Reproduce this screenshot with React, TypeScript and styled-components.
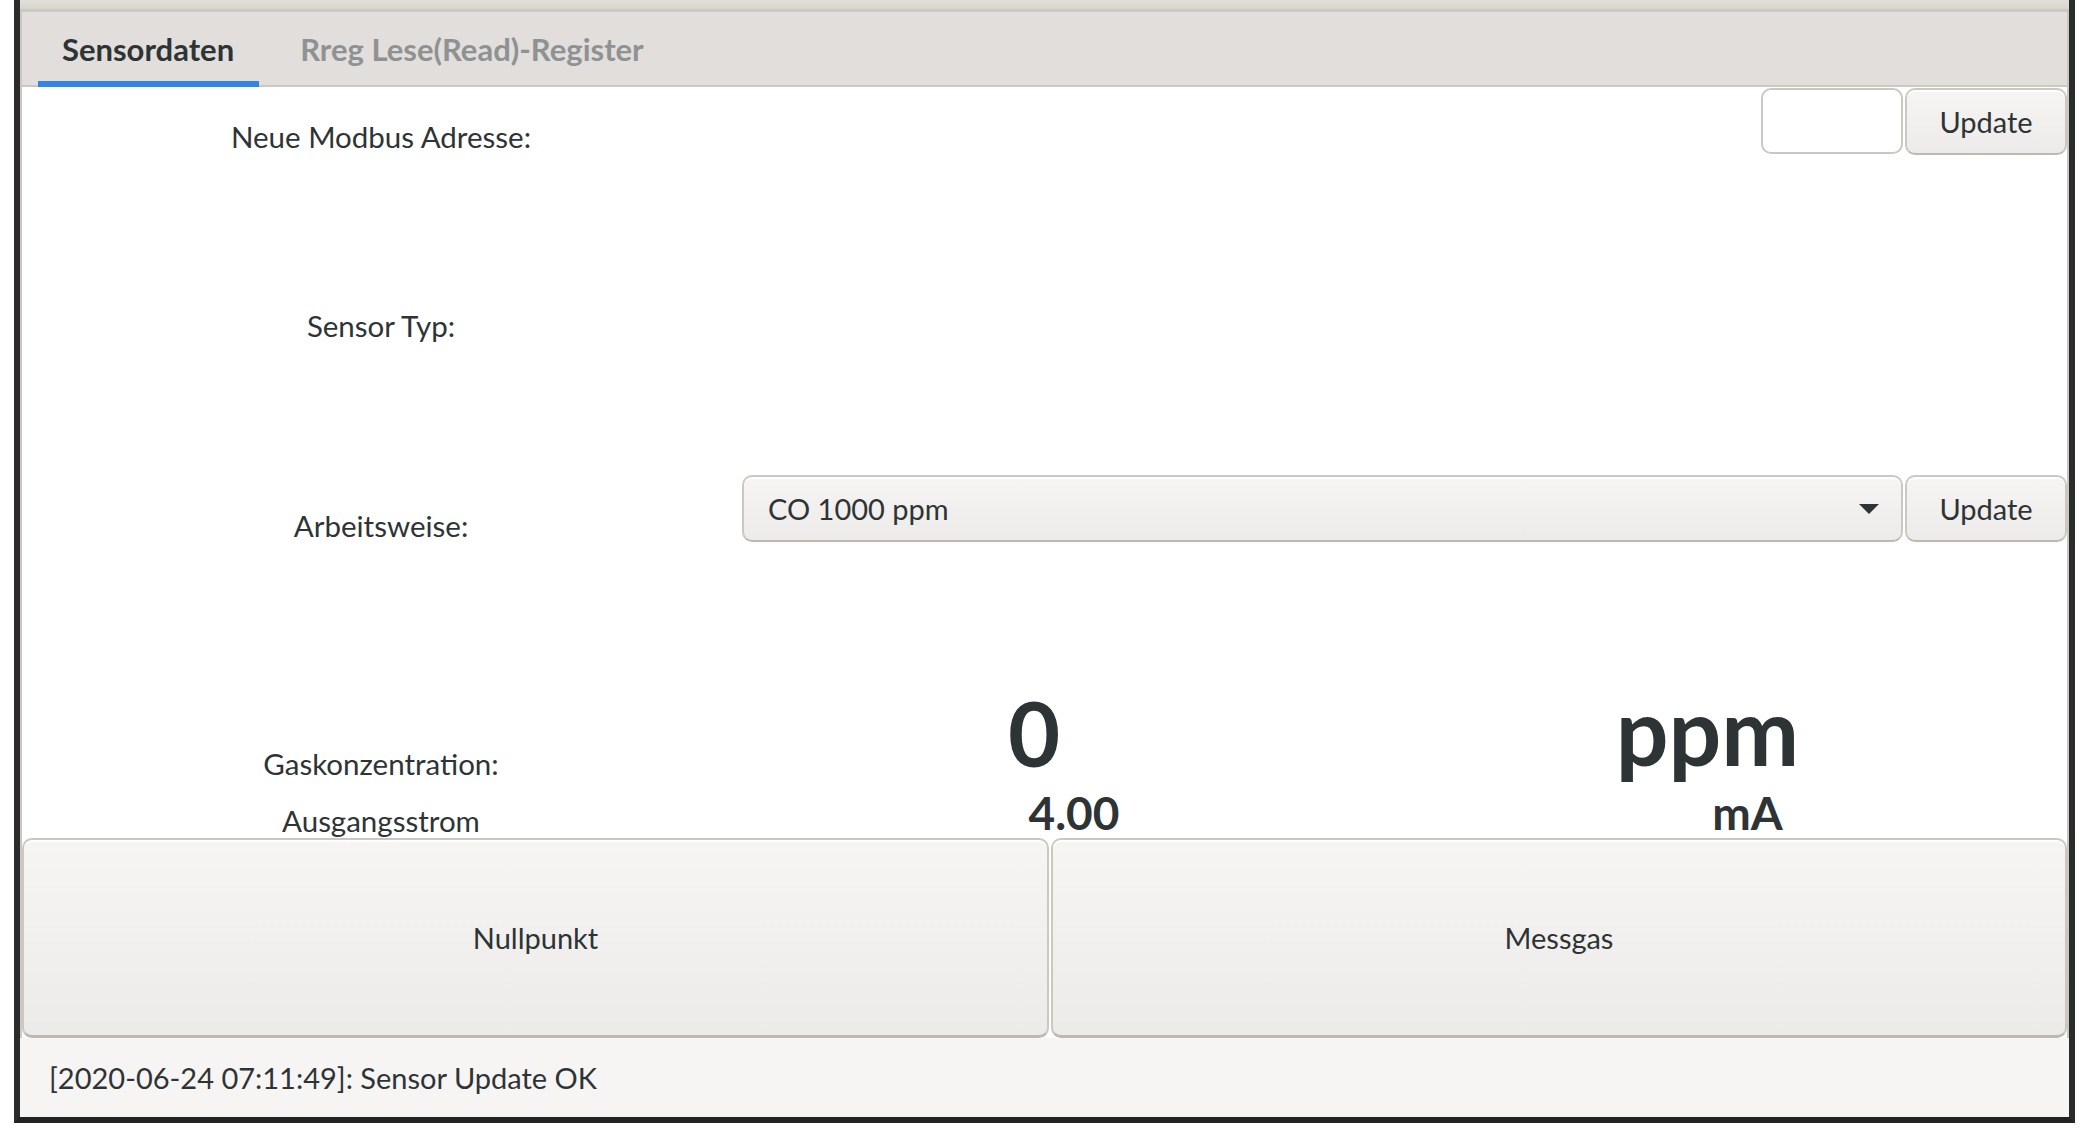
import React from "react";
import styled, { createGlobalStyle } from "styled-components";

const GlobalStyle = createGlobalStyle`
  html, body {
    margin: 0;
    padding: 0;
    background: #ffffff;
  }
  body {
    font-family: Lato, "Open Sans", "Noto Sans", sans-serif;
    color: #2e3436;
  }
`;

const Frame = styled.div`
  margin-left: 14px;
  width: 2061px;
  height: 1123px;
  box-sizing: border-box;
  border: 6px solid #2b2b2b;
  border-top: none;
  border-bottom-color: #222222;
  background: #f6f5f4;
  display: flex;
  flex-direction: column;
`;

const TopStrip = styled.div`
  height: 9px;
  background: linear-gradient(#e2dfdb, #d8d4d0);
`;

const Notebook = styled.div`
  height: 1029px;
  box-sizing: border-box;
  border: 2px solid #cdc7c2;
  border-top-width: 3px;
  border-bottom: none;
  display: flex;
  flex-direction: column;
`;

const TabBar = styled.div`
  height: 75px;
  box-sizing: border-box;
  background: #e1dedb;
  border-bottom: 2px solid #cdc7c2;
  display: flex;
  gap: 17px;
  padding-left: 16px;
`;

const Tab = styled.div<{ active?: boolean }>`
  position: relative;
  display: flex;
  align-items: center;
  padding: 0 25px 0 24px;
  font-size: 31px;
  font-weight: 700;
  color: ${(p) => (p.active ? "#2e3436" : "#8f9292")};

  &::after {
    content: "";
    display: ${(p) => (p.active ? "block" : "none")};
    position: absolute;
    left: 0;
    right: 0;
    bottom: -2px;
    height: 6px;
    background: #3584e4;
  }
`;

const Page = styled.div`
  flex: 1;
  background: #ffffff;
  display: flex;
  flex-direction: column;
`;

const FormRow = styled.div<{ h: number; pad?: number }>`
  height: ${(p) => p.h}px;
  display: grid;
  grid-template-columns: 718px 1fr auto auto;
  column-gap: 2px;
  align-items: start;
  padding-top: ${(p) => p.pad ?? 0}px;
  box-sizing: border-box;
`;

const Label = styled.div<{ shift?: number }>`
  font-size: 29.5px;
  text-align: center;
  align-self: center;
  transform: translateY(${(p) => p.shift ?? 0}px);
`;

const Entry = styled.div`
  grid-column: 3;
  width: 142px;
  height: 66px;
  box-sizing: border-box;
  background: #ffffff;
  border: 2px solid #cdc7c2;
  border-radius: 10px;
`;

const Button = styled.button`
  width: 162px;
  height: 67px;
  box-sizing: border-box;
  border: 2px solid #cdc7c2;
  border-bottom-color: #bfb8b1;
  border-radius: 10px;
  background: linear-gradient(#f6f5f4, #edebe9);
  box-shadow: inset 0 2px #ffffff;
  font-family: inherit;
  font-size: 29px;
  color: #2e3436;
  padding: 0;
`;

const Combo = styled.button`
  grid-column: 2 / span 2;
  height: 67px;
  box-sizing: border-box;
  border: 2px solid #cdc7c2;
  border-bottom-color: #bfb8b1;
  border-radius: 10px;
  background: linear-gradient(#f6f5f4, #edebe9);
  box-shadow: inset 0 2px #ffffff;
  font-family: inherit;
  font-size: 29px;
  color: #2e3436;
  display: flex;
  align-items: center;
  justify-content: space-between;
  padding: 0 22px 0 24px;
`;

const Arrow = styled.span`
  width: 0;
  height: 0;
  border-left: 10px solid transparent;
  border-right: 10px solid transparent;
  border-top: 10px solid #2e3436;
`;

const Readout = styled.div<{ h: number }>`
  height: ${(p) => p.h}px;
  display: grid;
  grid-template-columns: 718px 588px 1fr;
  align-items: end;
`;

const ReadLabel = styled.div<{ drop: number }>`
  font-size: 29.5px;
  line-height: 1;
  text-align: center;
  padding-bottom: ${(p) => p.drop}px;
`;

const Value = styled.div<{ size: number; drop: number; indent?: number }>`
  font-size: ${(p) => p.size}px;
  font-weight: 700;
  line-height: 1;
  text-align: center;
  padding-left: ${(p) => p.indent ?? 0}px;
  padding-bottom: ${(p) => p.drop}px;
`;

const BigButtons = styled.div`
  display: grid;
  grid-template-columns: 1027px 1fr;
  column-gap: 2px;
  height: 200px;
  background: #ffffff;
`;

const BigButton = styled(Button)`
  width: auto;
  height: 200px;
  border-bottom-width: 3px;
`;

const StatusBar = styled.div`
  flex: 1;
  display: flex;
  align-items: center;
  padding-left: 29px;
  font-size: 29px;
`;

export default function App() {
  return (
    <>
      <GlobalStyle />
      <Frame>
        <TopStrip />
        <Notebook>
          <TabBar>
            <Tab active>Sensordaten</Tab>
            <Tab>Rreg Lese(Read)-Register</Tab>
          </TabBar>
          <Page>
            <FormRow h={98} pad={1}>
              <Label>Neue Modbus Adresse:</Label>
              <Entry />
              <Button>Update</Button>
            </FormRow>
            <FormRow h={290}>
              <Label shift={-5}>Sensor Typ:</Label>
            </FormRow>
            <FormRow h={100}>
              <Label>Arbeitsweise:</Label>
              <Combo>
                <span>CO 1000 ppm</span>
                <Arrow />
              </Combo>
              <Button>Update</Button>
            </FormRow>
            <Readout h={215}>
              <ReadLabel drop={12}>Gaskonzentration:</ReadLabel>
              <Value size={90} drop={13}>0</Value>
              <Value size={93} drop={13} indent={20}>ppm</Value>
            </Readout>
            <Readout h={48}>
              <ReadLabel drop={13}>Ausgangsstrom</ReadLabel>
              <Value size={46} drop={12} indent={80}>4.00</Value>
              <Value size={46} drop={12} indent={100}>mA</Value>
            </Readout>
            <BigButtons>
              <BigButton>Nullpunkt</BigButton>
              <BigButton>Messgas</BigButton>
            </BigButtons>
          </Page>
        </Notebook>
        <StatusBar>[2020-06-24 07:11:49]: Sensor Update OK</StatusBar>
      </Frame>
    </>
  );
}
